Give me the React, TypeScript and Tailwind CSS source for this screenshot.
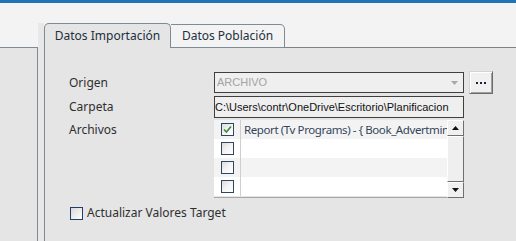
import { useState } from 'react';

const files = ['Report (Tv Programs) - { Book_Advertmin', '', '', ''];

function CheckBox({ checked }: { checked?: boolean }) {
  return (
    <span className="flex h-[13px] w-[13px] items-center justify-center border border-[#2e4660] bg-gradient-to-br from-[#dcdcdc] via-[#f4f4f4] to-[#ffffff]">
      {checked && (
        <svg width="9" height="9" viewBox="0 0 9 9">
          <path d="M1 4.5 L3.4 7 L8 1.5" fill="none" stroke="#3c8a3c" strokeWidth="1.6" />
        </svg>
      )}
    </span>
  );
}

function ScrollButton({ up }: { up?: boolean }) {
  return (
    <div className="flex h-[16px] w-[17px] items-center justify-center border border-t-white border-l-white border-b-[#6f6f6f] border-r-[#6f6f6f] bg-[#f0f0f0]">
      <svg width="7" height="4" viewBox="0 0 7 4">
        <path d={up ? 'M0 4 L3.5 0 L7 4 Z' : 'M0 0 L3.5 4 L7 0 Z'} fill="#111" />
      </svg>
    </div>
  );
}

export default function App() {
  const [target, setTarget] = useState(false);

  return (
    <div className="flex h-[241px] w-[516px] flex-col overflow-hidden bg-[#f3f3f3] font-['Noto_Sans',sans-serif] text-[12px] text-[#2f2f2f]">
      <div className="h-[3px] bg-[#1e74b6]" />
      <div className="flex flex-1">
        {/* left pane */}
        <div className="flex w-[38px] flex-col">
          <div className="h-[44px]" />
          <div className="flex-1 border-t border-r border-[#808a92] bg-[#e5e5e5]" />
        </div>
        <div className="flex w-[6px] flex-col">
          <div className="h-[20px]" />
          <div className="flex-1 bg-[#e8e8e8]" />
        </div>

        {/* tab control */}
        <div className="flex flex-1 flex-col pt-[20px]">
          <div className="flex h-[25px] items-end">
            <div className="flex h-[25px] w-[127px] items-center justify-center rounded-t-[5px] border border-b-0 border-[#7d8b94] bg-[#e5e5e5] pb-[1px] text-[#22303c]">
              Datos Importación
            </div>
            <div className="flex h-[24px] w-[114px] items-center justify-center rounded-tr-[5px] border-t border-r border-b border-[#7d8b94] bg-[#f3f3f3] pb-[1px] text-[#22303c]">
              Datos Población
            </div>
            <div className="h-[1px] flex-1 bg-[#7d8388]" />
          </div>

          <div className="flex-1 border-l border-[#7d8b94] bg-[#e5e5e5] pl-[24px] pt-[24px]">
            <div className="grid grid-cols-[145px_250px_29px] gap-y-[2px]">
              <div className="flex h-[21px] items-center">Origen</div>
              <div className="flex h-[21px] items-center justify-between border border-[#3f3f3f] bg-[#efefef] pl-[2px] pr-[5px] font-['Liberation_Sans',sans-serif] text-[11px] text-[#a3a3a3]">
                <span>ARCHIVO</span>
                <svg width="7" height="4" viewBox="0 0 7 4">
                  <path d="M0 0 L3.5 4 L7 0 Z" fill="#a9a9a9" />
                </svg>
              </div>
              <div className="pl-[5px]">
                <button className="-mt-[1px] flex h-[23px] w-[24px] items-center justify-center border border-t-[#d4d4d4] border-l-[#d4d4d4] border-b-[#6b6b6b] border-r-[#6b6b6b] bg-[#f0f0f0] shadow-[inset_1px_1px_0_#ffffff,inset_-1px_-1px_0_#a0a0a0]">
                  <span className="flex gap-[2px]">
                    <span className="h-[2px] w-[2px] bg-[#2a1a3a]" />
                    <span className="h-[2px] w-[2px] bg-[#2a1a3a]" />
                    <span className="h-[2px] w-[2px] bg-[#2a1a3a]" />
                  </span>
                </button>
              </div>

              <div className="flex h-[22px] items-center">Carpeta</div>
              <div className="flex h-[22px] items-center overflow-hidden whitespace-nowrap border border-[#3f3f3f] bg-[#efefef] font-['Liberation_Sans',sans-serif] text-[11px] text-[#111]">
                C:\Users\contr\OneDrive\Escritorio\Planificacion
              </div>
              <div />

              <div className="flex h-[19px] items-center">Archivos</div>
              <div className="flex min-w-0">
                <div className="flex min-w-0 flex-1 flex-col border-b border-[#a8a8a8]">
                  {files.map((f, i) => (
                    <div
                      key={i}
                      className={`flex h-[19px] ${i % 2 === 0 ? 'bg-[#f3f3f3]' : 'bg-white'}`}
                    >
                      <div className="flex w-[27px] shrink-0 items-center justify-center border-r border-[#cfcfcf] pl-[1px]">
                        <CheckBox checked={i === 0} />
                      </div>
                      <div className="flex min-w-0 items-center overflow-hidden whitespace-nowrap pl-[3px] text-[11.5px] tracking-[-0.4px] text-[#34465a]">
                        {f}
                      </div>
                    </div>
                  ))}
                </div>
                <div className="flex h-[78px] w-[17px] shrink-0 flex-col">
                  <ScrollButton up />
                  <div className="h-[46px] border border-t-white border-l-white border-b-[#6f6f6f] border-r-[#6f6f6f] bg-[#efefef]" />
                  <div className="flex-1 bg-[#f7f7f7]" />
                  <ScrollButton />
                </div>
              </div>
              <div />
            </div>

            <label className="mt-[6px] flex items-center gap-[4px] pl-[1px]" onClick={() => setTarget(!target)}>
              <span className="flex h-[13px] w-[13px] items-center justify-center border border-[#1f3f66] bg-gradient-to-br from-[#d8d8d8] to-white" />
              <span>Actualizar Valores Target</span>
            </label>
          </div>
        </div>
      </div>
    </div>
  );
}
